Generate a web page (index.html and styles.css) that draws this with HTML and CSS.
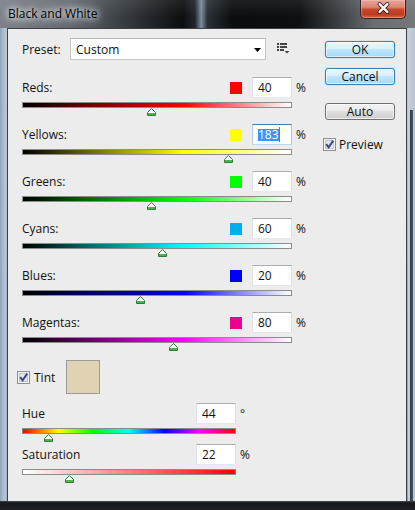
FILE: index.html
```html
<!DOCTYPE html>
<html>
<head>
<meta charset="utf-8">
<title>Black and White</title>
<link rel="stylesheet" href="styles.css">
</head>
<body>
<div class="window">
  <div class="titlebar">
    <span class="title">Black and White</span>
    <div class="close">
      <svg width="46" height="19" viewBox="0 0 46 19">
        <g stroke-linecap="round">
          <path d="M20 5 L28 13 M28 5 L20 13" stroke="#3a1c16" stroke-width="4.2"/>
          <path d="M20 5 L28 13 M28 5 L20 13" stroke="#ffffff" stroke-width="2.4"/>
        </g>
      </svg>
    </div>
  </div>
  <div class="panel">
    <div class="left">
      <div class="preset">
        <span class="preset-lbl">Preset:</span>
        <div class="select">
          <span>Custom</span>
          <svg class="arrow" width="7" height="4" viewBox="0 0 7 4"><polygon points="0,0 7,0 3.5,4" fill="#000"/></svg>
        </div>
        <svg class="menu-icon" width="13" height="11" viewBox="0 0 13 11">
          <g fill="#444">
            <rect x="0" y="0" width="2" height="2"/><rect x="3" y="0" width="7" height="2"/>
            <rect x="0" y="3" width="2" height="2"/><rect x="3" y="3" width="7" height="2"/>
            <rect x="0" y="6" width="2" height="2"/><rect x="3" y="6" width="4" height="2"/>
            <polygon points="7.5,8 12.5,8 10,10.5"/>
          </g>
        </svg>
      </div>

      <div class="channels">
        <div class="channel">
          <div class="top">
            <span class="lbl">Reds:</span>
            <span class="swatch sw-red"></span>
            <span class="field">40</span>
            <span class="unit">%</span>
          </div>
          <div class="track">
            <div class="bar bar-red"></div>
            <svg class="thumb" style="--pos:48%" width="9" height="8" viewBox="0 0 9 8"><polygon points="4.5,0.5 8.5,4.5 8.5,7.5 0.5,7.5 0.5,4.5" fill="#fff" stroke="#2f7a34"/><rect x="1" y="5" width="7" height="2" fill="#4fb356"/></svg>
          </div>
        </div>

        <div class="channel">
          <div class="top">
            <span class="lbl">Yellows:</span>
            <span class="swatch sw-yellow"></span>
            <span class="field focused"><span class="sel">183</span><span class="caret"></span></span>
            <span class="unit">%</span>
          </div>
          <div class="track">
            <div class="bar bar-yellow"></div>
            <svg class="thumb" style="--pos:76.6%" width="9" height="8" viewBox="0 0 9 8"><polygon points="4.5,0.5 8.5,4.5 8.5,7.5 0.5,7.5 0.5,4.5" fill="#fff" stroke="#2f7a34"/><rect x="1" y="5" width="7" height="2" fill="#4fb356"/></svg>
          </div>
        </div>

        <div class="channel">
          <div class="top">
            <span class="lbl">Greens:</span>
            <span class="swatch sw-green"></span>
            <span class="field">40</span>
            <span class="unit">%</span>
          </div>
          <div class="track">
            <div class="bar bar-green"></div>
            <svg class="thumb" style="--pos:48%" width="9" height="8" viewBox="0 0 9 8"><polygon points="4.5,0.5 8.5,4.5 8.5,7.5 0.5,7.5 0.5,4.5" fill="#fff" stroke="#2f7a34"/><rect x="1" y="5" width="7" height="2" fill="#4fb356"/></svg>
          </div>
        </div>

        <div class="channel">
          <div class="top">
            <span class="lbl">Cyans:</span>
            <span class="swatch sw-cyan"></span>
            <span class="field">60</span>
            <span class="unit">%</span>
          </div>
          <div class="track">
            <div class="bar bar-cyan"></div>
            <svg class="thumb" style="--pos:52%" width="9" height="8" viewBox="0 0 9 8"><polygon points="4.5,0.5 8.5,4.5 8.5,7.5 0.5,7.5 0.5,4.5" fill="#fff" stroke="#2f7a34"/><rect x="1" y="5" width="7" height="2" fill="#4fb356"/></svg>
          </div>
        </div>

        <div class="channel">
          <div class="top">
            <span class="lbl">Blues:</span>
            <span class="swatch sw-blue"></span>
            <span class="field">20</span>
            <span class="unit">%</span>
          </div>
          <div class="track">
            <div class="bar bar-blue"></div>
            <svg class="thumb" style="--pos:44%" width="9" height="8" viewBox="0 0 9 8"><polygon points="4.5,0.5 8.5,4.5 8.5,7.5 0.5,7.5 0.5,4.5" fill="#fff" stroke="#2f7a34"/><rect x="1" y="5" width="7" height="2" fill="#4fb356"/></svg>
          </div>
        </div>

        <div class="channel">
          <div class="top">
            <span class="lbl">Magentas:</span>
            <span class="swatch sw-magenta"></span>
            <span class="field">80</span>
            <span class="unit">%</span>
          </div>
          <div class="track">
            <div class="bar bar-magenta"></div>
            <svg class="thumb" style="--pos:56%" width="9" height="8" viewBox="0 0 9 8"><polygon points="4.5,0.5 8.5,4.5 8.5,7.5 0.5,7.5 0.5,4.5" fill="#fff" stroke="#2f7a34"/><rect x="1" y="5" width="7" height="2" fill="#4fb356"/></svg>
          </div>
        </div>
      </div>

      <div class="tint">
        <label class="check tint-check">
          <svg class="cb" width="13" height="13" viewBox="0 0 13 13"><rect x="0.5" y="0.5" width="12" height="12" fill="#f6f6f6" stroke="#8e8f8f"/><rect x="2.5" y="2.5" width="8" height="8" fill="#e3e5e8" stroke="#c2c6cb"/><path d="M3.2 6.2 L5.6 9.3 L10.2 2.6" fill="none" stroke="#34478c" stroke-width="1.9"/></svg>
          <span>Tint</span>
        </label>
        <span class="tint-swatch"></span>
      </div>

      <div class="tintctl">
        <div class="hs">
          <div class="top">
            <span class="lbl">Hue</span>
            <span class="field">44</span>
            <span class="unit">°</span>
          </div>
          <div class="track">
            <div class="bar bar-hue"></div>
            <svg class="thumb" style="--pos:12.2%" width="9" height="8" viewBox="0 0 9 8"><polygon points="4.5,0.5 8.5,4.5 8.5,7.5 0.5,7.5 0.5,4.5" fill="#fff" stroke="#2f7a34"/><rect x="1" y="5" width="7" height="2" fill="#4fb356"/></svg>
          </div>
        </div>
        <div class="hs">
          <div class="top">
            <span class="lbl">Saturation</span>
            <span class="field">22</span>
            <span class="unit">%</span>
          </div>
          <div class="track">
            <div class="bar bar-sat"></div>
            <svg class="thumb" style="--pos:22%" width="9" height="8" viewBox="0 0 9 8"><polygon points="4.5,0.5 8.5,4.5 8.5,7.5 0.5,7.5 0.5,4.5" fill="#fff" stroke="#2f7a34"/><rect x="1" y="5" width="7" height="2" fill="#4fb356"/></svg>
          </div>
        </div>
      </div>
    </div>

    <div class="right">
      <div class="btn primary ok">OK</div>
      <div class="btn primary cancel">Cancel</div>
      <div class="btn auto">Auto</div>
      <label class="check preview">
        <svg class="cb" width="13" height="13" viewBox="0 0 13 13"><rect x="0.5" y="0.5" width="12" height="12" fill="#f6f6f6" stroke="#8e8f8f"/><rect x="2.5" y="2.5" width="8" height="8" fill="#e3e5e8" stroke="#c2c6cb"/><path d="M3.2 6.2 L5.6 9.3 L10.2 2.6" fill="none" stroke="#34478c" stroke-width="1.9"/></svg>
        <span>Preview</span>
      </label>
    </div>
  </div>
</div>
</body>
</html>
```

FILE: styles.css
```css
* { box-sizing: border-box; }

html, body {
  margin: 0;
  padding: 0;
}

body {
  font-family: "Open Sans", "Noto Sans", "DejaVu Sans", sans-serif;
  font-size: 12px;
  color: #111;
  background: #000;
}

.window {
  width: 415px;
  height: 510px;
  overflow: hidden;
  display: flex;
  flex-direction: column;
  background:
    linear-gradient(to bottom, transparent 0, transparent 501px, #3a3f45 501px, #16191c 503px, #1d2125 510px),
    linear-gradient(to right, transparent 0, transparent 410px, #2f3944 410px, #46586b 413px, transparent 413px) 0 110px / 415px 392px no-repeat,
    linear-gradient(to right, #8fa4ba 0, #a9bacb 3px, #b8c6d4 6px, transparent 7px, transparent 408px, #c9d0d7 408px, #b7c2cd 415px),
    linear-gradient(to bottom, #c8cdd2 0, #b9c4cf 120px, #8ea6bf 320px, #8aa2bb 510px);
}

/* Title bar */
.titlebar {
  height: 28px;
  flex: none;
  display: flex;
  align-items: flex-start;
  justify-content: space-between;
  background:
    linear-gradient(to bottom, rgba(255,255,255,0.08) 0, rgba(0,0,0,0) 60%),
    linear-gradient(to right, #7b8189 0, #5f656c 18%, #2a2e32 34%, #0c0e10 44%, #20262c 47%, #7c8d9d 48.5%, #2a3036 50%, #0b0d0f 56%, #0d0f11 72%, #3d4145 82%, #6a6e73 90%, #747879 100%);
}

.title {
  margin-left: 8px;
  line-height: 28px;
  color: #000;
  text-shadow: 0 0 6px #fff, 0 0 10px rgba(255,255,255,0.9), 0 0 14px rgba(255,255,255,0.7);
}

.close {
  width: 46px;
  height: 19px;
  margin-right: 9px;
  border: 1px solid #3b1f1a;
  border-top: none;
  border-radius: 0 0 5px 5px;
  background: linear-gradient(to bottom, #e7a697 0, #d98575 40%, #c8492f 52%, #bd3a1e 80%, #d46a4a 100%);
  box-shadow: inset 0 0 0 1px rgba(255,210,200,0.35);
  display: flex;
  overflow: hidden;
}

.close svg { display: block; margin: -1px 0 0 -1px; }

/* Panel */
.panel {
  flex: 1;
  margin: 0 8px 8px 7px;
  border: 1px solid #3c4147;
  background: #ececec;
  display: flex;
  align-items: flex-start;
}

.left {
  width: 298px;
  padding: 9px 0 0 14px;
}

.right {
  width: 70px;
  margin-left: 19px;
  padding-top: 12px;
  display: flex;
  flex-direction: column;
}

/* Preset row */
.preset {
  display: flex;
  align-items: center;
  height: 22px;
}

.preset-lbl { width: 48px; }

.select {
  width: 196px;
  height: 22px;
  background: #fff;
  border: 1px solid #c6c6c6;
  border-top-color: #b4b4b4;
  padding: 0 4px 0 5px;
  display: flex;
  align-items: center;
  justify-content: space-between;
}

.arrow { display: block; margin-top: 1px; }

.menu-icon { display: block; margin-left: 11px; margin-top: -1px; }

/* Channels */
.channels {
  margin-top: 17px;
  display: flex;
  flex-direction: column;
  gap: 8px;
}

.top {
  display: flex;
  align-items: center;
  height: 21px;
}

.channel .top { width: 284px; }
.hs .top { width: 228px; }

.lbl { flex: 1; }

.swatch {
  width: 12px;
  height: 12px;
  margin-right: 10px;
}

.sw-red { background: #ff0000; }
.sw-yellow { background: #ffff00; }
.sw-green { background: #00ff00; }
.sw-cyan { background: #00aeef; }
.sw-blue { background: #0000ff; }
.sw-magenta { background: #ec008c; }

.field {
  width: 40px;
  height: 21px;
  background: #fff;
  border: 1px solid;
  border-color: #abadb3 #dbdfe6 #e3e9ef #e2e3ea;
  padding-left: 5px;
  line-height: 19px;
  display: flex;
  align-items: center;
}

.field.focused {
  border-color: #3d7bad #a4c9e3 #b7d9ed #b5cfe7;
}

.sel {
  background: #3399ff;
  color: #fff;
  height: 12px;
  line-height: 12px;
  display: block;
}

.caret {
  width: 1px;
  height: 15px;
  background: #b8661f;
  display: block;
}

.unit {
  width: 14px;
  padding-left: 4px;
}

.track {
  position: relative;
  margin-top: 4px;
  height: 14px;
}

.channel .track { width: 270px; }
.hs .track { width: 214px; }

.bar {
  height: 6px;
  border: 1px solid #8c8c8c;
}

.bar-red { background: linear-gradient(to right, #000 0, #ff0000 60%, #fff 100%); }
.bar-yellow { background: linear-gradient(to right, #000 0, #ffff00 60%, #fff 100%); }
.bar-green { background: linear-gradient(to right, #000 0, #00ff00 60%, #fff 100%); }
.bar-cyan { background: linear-gradient(to right, #000 0, #00ffff 60%, #fff 100%); }
.bar-blue { background: linear-gradient(to right, #000 0, #0000ff 60%, #fff 100%); }
.bar-magenta { background: linear-gradient(to right, #000 0, #ff00ff 60%, #fff 100%); }
.bar-hue { background: linear-gradient(to right, #ff0000 0, #ffff00 16.67%, #00ff00 33.33%, #00ffff 50%, #0000ff 66.67%, #ff00ff 83.33%, #ff0000 100%); }
.bar-sat { background: linear-gradient(to right, #ffffff 0, #ff0000 100%); }

.thumb {
  position: absolute;
  top: 6px;
  left: calc(var(--pos) - 4.5px);
  display: block;
}

/* Tint */
.tint {
  margin-top: 9px;
  height: 34px;
  display: flex;
  align-items: center;
}

.check {
  display: flex;
  align-items: center;
}

.cb { display: block; flex: none; }

.tint-check {
  width: 49px;
  margin-left: -5px;
}

.tint-check span { margin-left: 4px; }

.tint-swatch {
  width: 34px;
  height: 34px;
  background: #dfd3b3;
  border: 1px solid #9b9b9b;
}

.tintctl {
  margin-top: 9px;
  display: flex;
  flex-direction: column;
  gap: 2px;
}

/* Buttons */
.btn {
  height: 17px;
  border-radius: 3px;
  display: flex;
  align-items: center;
  justify-content: center;
  line-height: 15px;
}

.btn.primary {
  border: 1px solid #3c7fb1;
  background: linear-gradient(to bottom, #eaf6fd 0, #d9f0fc 45%, #bee6fd 50%, #a7d9f5 100%);
  box-shadow: inset 0 0 0 1px rgba(255,255,255,0.6), 0 0 1px #48a7e8;
}

.ok { margin-bottom: 10px; }
.cancel { margin-bottom: 18px; }

.btn.auto {
  border: 1px solid #707070;
  background: linear-gradient(to bottom, #f2f2f2 0, #ebebeb 45%, #dddddd 50%, #cfcfcf 100%);
  box-shadow: inset 0 0 0 1px rgba(255,255,255,0.7);
  margin-bottom: 16px;
}

.preview {
  margin-left: -2px;
}

.preview span { margin-left: 3px; }
```
